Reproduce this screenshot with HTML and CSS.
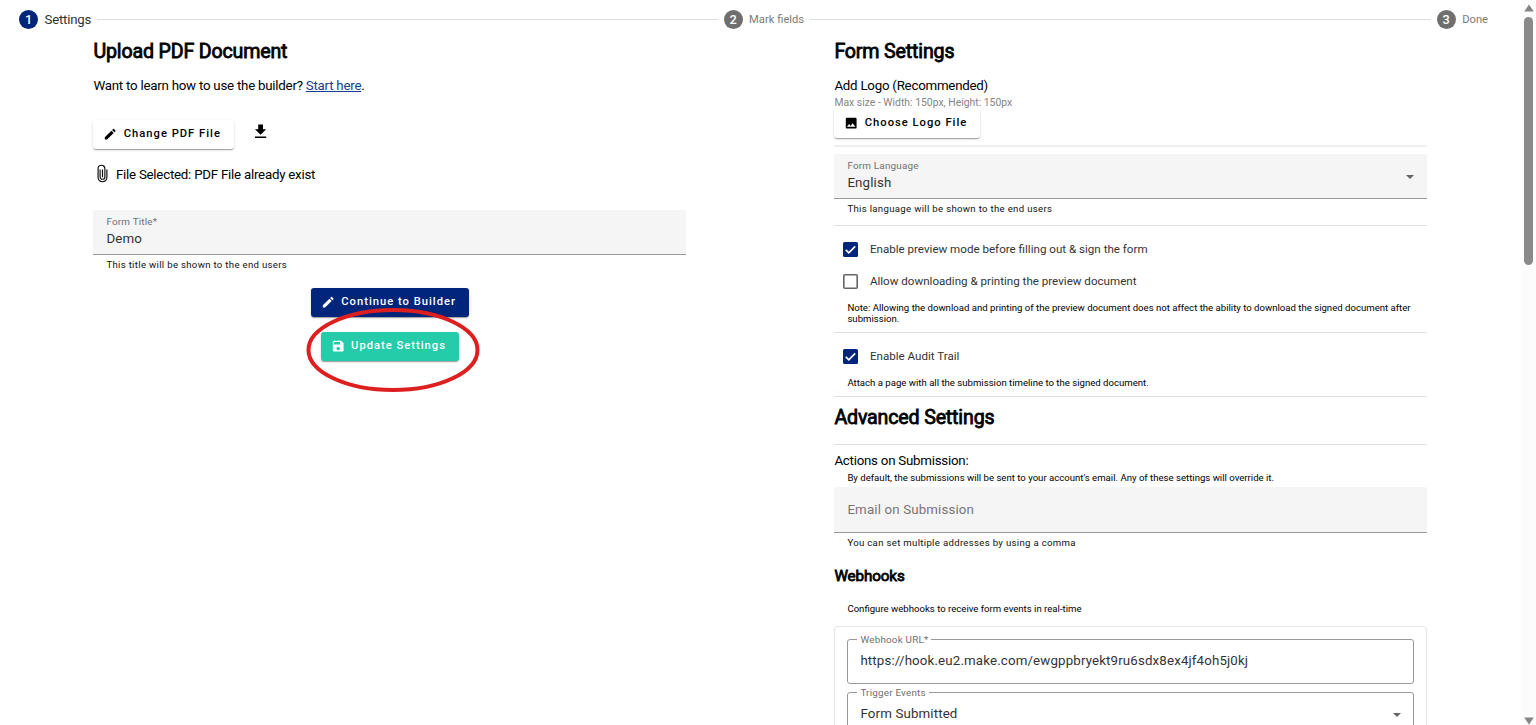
FILE: index.html
```html
<!DOCTYPE html>
<html lang="en">
<head>
<meta charset="utf-8">
<title>Form Settings</title>
<link rel="stylesheet" href="styles.css">
</head>
<body>
<div class="app">
  <div class="page">
    <header class="stepper">
      <div class="step active"><span class="num">1</span><span class="step-label">Settings</span></div>
      <div class="step-line"></div>
      <div class="step"><span class="num">2</span><span class="step-label">Mark fields</span></div>
      <div class="step-line"></div>
      <div class="step"><span class="num">3</span><span class="step-label">Done</span></div>
    </header>
    <main class="columns">
      <section class="upload">
        <h2>Upload PDF Document</h2>
        <p class="body learn">Want to learn how to use the builder? <a href="#">Start here</a>.</p>
        <div class="file-actions">
          <button class="btn change"><svg class="ico" viewBox="0 0 24 24"><path d="M3 17.25V21h3.75L17.81 9.94l-3.75-3.75L3 17.25zM20.71 7.04a1 1 0 0 0 0-1.41l-2.34-2.34a1 1 0 0 0-1.41 0l-1.83 1.83 3.75 3.75 1.83-1.83z"/></svg><span>Change PDF File</span></button>
          <svg class="download" viewBox="0 0 24 24"><path d="M19 9h-4V3H9v6H5l7 7 7-7zM5 18v2h14v-2H5z"/></svg>
        </div>
        <div class="selected">
          <svg class="clip" viewBox="0 0 12 20"><path d="M10.800 5.500v8.700a4.800 4.800 0 0 1-9.600 0V4.700a3.700 3.700 0 0 1 7.400 0v9a2.600 2.600 0 0 1-5.200 0V5.500M6 5.500v8.500"/></svg>
          <span class="body">File Selected: PDF File already exist</span>
        </div>
        <div class="field filled title-field"><span class="label">Form Title*</span><span class="value">Demo</span></div>
        <div class="helper">This title will be shown to the end users</div>
        <div class="submit">
          <button class="btn navy"><svg class="ico" viewBox="0 0 24 24"><path d="M3 17.25V21h3.75L17.81 9.94l-3.75-3.75L3 17.25zM20.71 7.04a1 1 0 0 0 0-1.41l-2.34-2.34a1 1 0 0 0-1.41 0l-1.83 1.83 3.75 3.75 1.83-1.83z"/></svg><span>Continue to Builder</span></button>
          <button class="btn teal"><svg class="ico" viewBox="0 0 24 24"><path d="M17 3H5a2 2 0 0 0-2 2v14a2 2 0 0 0 2 2h14c1.1 0 2-.9 2-2V7l-4-4zm-5 16a3 3 0 1 1 0-6 3 3 0 0 1 0 6zm3-10H5V5h10v4z"/></svg><span>Update Settings</span></button>
          <svg class="highlight" viewBox="0 0 174 86"><ellipse cx="87" cy="43" rx="84.5" ry="40"/></svg>
        </div>
      </section>
      <section class="settings">
        <h2>Form Settings</h2>
        <p class="body logo-title">Add Logo (Recommended)</p>
        <p class="hint">Max size - Width: 150px, Height: 150px</p>
        <button class="btn logo"><svg class="ico" viewBox="0 0 24 24"><path d="M21 19V5a2 2 0 0 0-2-2H5a2 2 0 0 0-2 2v14c0 1.1.9 2 2 2h14a2 2 0 0 0 2-2zM8.500 13.500l2.500 3.010L14.500 12l4.500 6H5l3.500-4.500z"/></svg><span>Choose Logo File</span></button>
        <hr class="thick">
        <div class="field filled"><span class="label">Form Language</span><span class="value">English</span><span class="caret"></span></div>
        <div class="helper">This language will be shown to the end users</div>
        <hr class="after-helper">
        <div class="checks">
          <label class="check"><svg class="box" viewBox="0 0 15 15"><rect class="on" width="15" height="15" rx="1.500"/><path d="M2.800 7.900l3 3 6.400-6.500"/></svg><span>Enable preview mode before filling out &amp; sign the form</span></label>
          <label class="check"><svg class="box" viewBox="0 0 15 15"><rect class="off" x=".8" y=".8" width="13.400" height="13.400" rx="1"/></svg><span>Allow downloading &amp; printing the preview document</span></label>
        </div>
        <p class="note">Note: Allowing the download and printing of the preview document does not affect the ability to download the signed document after submission.</p>
        <hr>
        <div class="checks">
          <label class="check"><svg class="box" viewBox="0 0 15 15"><rect class="on" width="15" height="15" rx="1.500"/><path d="M2.800 7.900l3 3 6.400-6.500"/></svg><span>Enable Audit Trail</span></label>
        </div>
        <p class="note">Attach a page with all the submission timeline to the signed document.</p>
        <hr>
        <h2 class="advanced">Advanced Settings</h2>
        <hr class="after-title">
        <p class="body actions-title">Actions on Submission:</p>
        <p class="note tight">By default, the submissions will be sent to your account's email. Any of these settings will override it.</p>
        <div class="field filled empty"><span class="placeholder">Email on Submission</span></div>
        <div class="helper low">You can set multiple addresses by using a comma</div>
        <h3>Webhooks</h3>
        <p class="note configure">Configure webhooks to receive form events in real-time</p>
        <div class="card">
          <fieldset class="outlined"><legend>Webhook URL*</legend><span class="value url">https://hook.eu2.make.com/ewgppbryekt9ru6sdx8ex4jf4oh5j0kj</span></fieldset>
          <fieldset class="outlined"><legend>Trigger Events</legend><span class="value">Form Submitted</span><span class="caret"></span></fieldset>
        </div>
      </section>
    </main>
  </div>
  <aside class="scrollbar">
    <svg viewBox="0 0 10 8"><path d="M5 0.500L9.800 7.500H.2z"/></svg>
    <div class="thumb"></div>
    <svg class="down" viewBox="0 0 10 8"><path d="M5 7.500L9.800.5H.2z"/></svg>
  </aside>
</div>
</body>
</html>
```
FILE: styles.css
```css
* { box-sizing: border-box; }
body { margin: 0; background: #fff; color: #000; font-family: Roboto, "Liberation Sans", sans-serif; overflow: hidden; }
p, h2, h3 { margin: 0; white-space: nowrap; }
.app { display: flex; height: 725px; overflow: hidden; }
.page { flex: 1; min-width: 0; }

.stepper { display: flex; align-items: center; height: 39px; padding: 0 33px 0 19px; }
.step { display: flex; align-items: center; gap: 6.500px; font-size: 11.2px; color: #7c7c7c; }
.num { display: flex; align-items: center; justify-content: center; width: 19px; height: 19px; border-radius: 50%; background: #6f6f6f; color: #fff; font-size: 12.8px; font-weight: 500; }
.step.active { font-size: 13.2px; letter-spacing: -.2px; color: #333; }
.active .num { background: #00257a; }
.step-line { flex: 1; height: 1px; margin: 0 6px; background: #dcdcdc; }

.columns { display: grid; grid-template-columns: 593px 593px; column-gap: 148px; padding-left: 93.400px; }
.upload, .settings { display: flex; flex-direction: column; }
h2, h3 { font-weight: 400; -webkit-text-stroke: .8px #000; }
h2 { height: 24px; line-height: 25px; font-size: 19.600px; letter-spacing: -.16px; }
h3 { height: 20px; line-height: 20px; margin-top: 14px; font-size: 15.200px; letter-spacing: -.1px; }
.body { font-size: 13.3px; line-height: 18px; letter-spacing: -.235px; }
.learn, .logo-title { height: 18px; margin-top: 14px; }
.learn a { color: #1a3c8c; }

.btn { display: flex; align-items: center; align-self: flex-start; gap: 6px; height: 29px; padding: 0 0 0 10px; border: 0; border-radius: 3px; background: #fff; color: #000; font: 500 11.2px/16px Roboto, sans-serif; letter-spacing: 1px; white-space: nowrap; box-shadow: 0 2px 1px -1px rgba(0,0,0,.2), 0 1px 1px rgba(0,0,0,.14), 0 1px 3px rgba(0,0,0,.14); }
.ico { width: 14.400px; height: 14.400px; fill: currentColor; flex: none; }
.btn span { height: 17px; }
.file-actions { display: flex; align-items: flex-start; margin-top: 25px; }
.change { width: 141px; }
.download { width: 19.200px; height: 19.200px; margin: 2px 0 0 17px; }
.selected { display: flex; align-items: center; gap: 7.500px; height: 20px; margin: 16px 0 0 4px; }
.clip { width: 11px; height: 19px; margin-top: -4px; fill: none; stroke: #111; stroke-width: 1.300; }

.field { display: flex; position: relative; flex-direction: column; height: 45px; padding: 6px 13px 0; border-bottom: 1px solid #999; border-radius: 3px 3px 0 0; background: #f5f5f5; }
.title-field { margin-top: 25px; }
.label, legend { font-size: 9.900px; letter-spacing: .2px; color: #707070; }
.label { height: 13px; line-height: 12px; }
.value { font-size: 13.300px; line-height: 19px; letter-spacing: .145px; color: #333; white-space: nowrap; }
.caret { position: absolute; right: 13px; top: 21px; border: 4px solid transparent; border-top-color: #666; border-bottom: 0; }
.helper { height: 20px; padding-left: 13px; font-size: 9.600px; line-height: 20px; letter-spacing: .32px; color: #111; }
.submit { display: flex; position: relative; flex-direction: column; align-items: center; gap: 15px; margin-top: 13px; }
.submit .btn { align-self: center; color: #fff; }
.navy { width: 158px; background: #00257a; }
.teal { width: 138.400px; background: #24ccaa; }
.highlight { position: absolute; left: 212.600px; top: 19px; width: 174px; height: 86px; fill: none; stroke: #dd201f; stroke-width: 4; }

.hint { height: 14px; line-height: 15px; font-size: 10.400px; color: #858585; }
.logo { width: 146px; }
hr { width: 100%; height: 1px; margin: 8px 0 0; border: 0; background: #e0e0e0; }
.thick { height: 2px; margin: 7px 0; background: #f0f0f0; }
.after-helper { margin-top: 6px; }
.checks { padding: 7px 0 0 8.500px; }
.check { display: flex; align-items: center; gap: 12px; height: 32px; font-size: 11.600px; letter-spacing: 0; color: #333; }
.box { width: 15px; height: 15px; margin-top: 1px; }
.box .on { fill: #00257a; }
.box .off { fill: none; stroke: #666; stroke-width: 1.600; }
.box path { fill: none; stroke: #fff; stroke-width: 1.600; }
.note { margin-top: 5px; padding-left: 13px; font-size: 9.600px; line-height: 11px; white-space: normal; }
.advanced { margin-top: 8px; }
.after-title { margin-top: 15px; }
.actions-title { margin-top: 7px; height: 17px; line-height: 17px; }
.tight { margin-top: 3px; }
.empty { height: 46px; margin-top: 4px; padding-top: 13px; }
.placeholder { font-size: 13.300px; line-height: 19px; letter-spacing: .145px; color: #757575; }
.low { height: 19px; line-height: 19px; }
.configure { margin-top: 17px; }
.card { display: flex; flex-direction: column; gap: 8px; height: 130px; margin-top: 12px; padding: 12px; border: 1px solid #e4e4e4; border-radius: 4px; }
.outlined { position: relative; min-width: 0; height: 51px; margin: -6px 0 0; padding: 0 0 0 9px; border: 1px solid #999; border-radius: 3px; }
.outlined legend { height: 13px; line-height: 13px; padding: 0 3px; }
.outlined .value { display: block; margin: 5px 0 0 3px; }
.outlined .caret { right: 12px; top: 14px; }

.scrollbar { display: flex; flex-direction: column; align-items: center; width: 15px; padding: 4px 0 0; background: #fcfcfc; }
.scrollbar svg { width: 10px; height: 8px; fill: #858585; }
.thumb { width: 9px; height: 248px; margin-top: 5px; border-radius: 5px; background: #8a8a8a; }
.scrollbar .down { margin: auto 0 0; }
```
